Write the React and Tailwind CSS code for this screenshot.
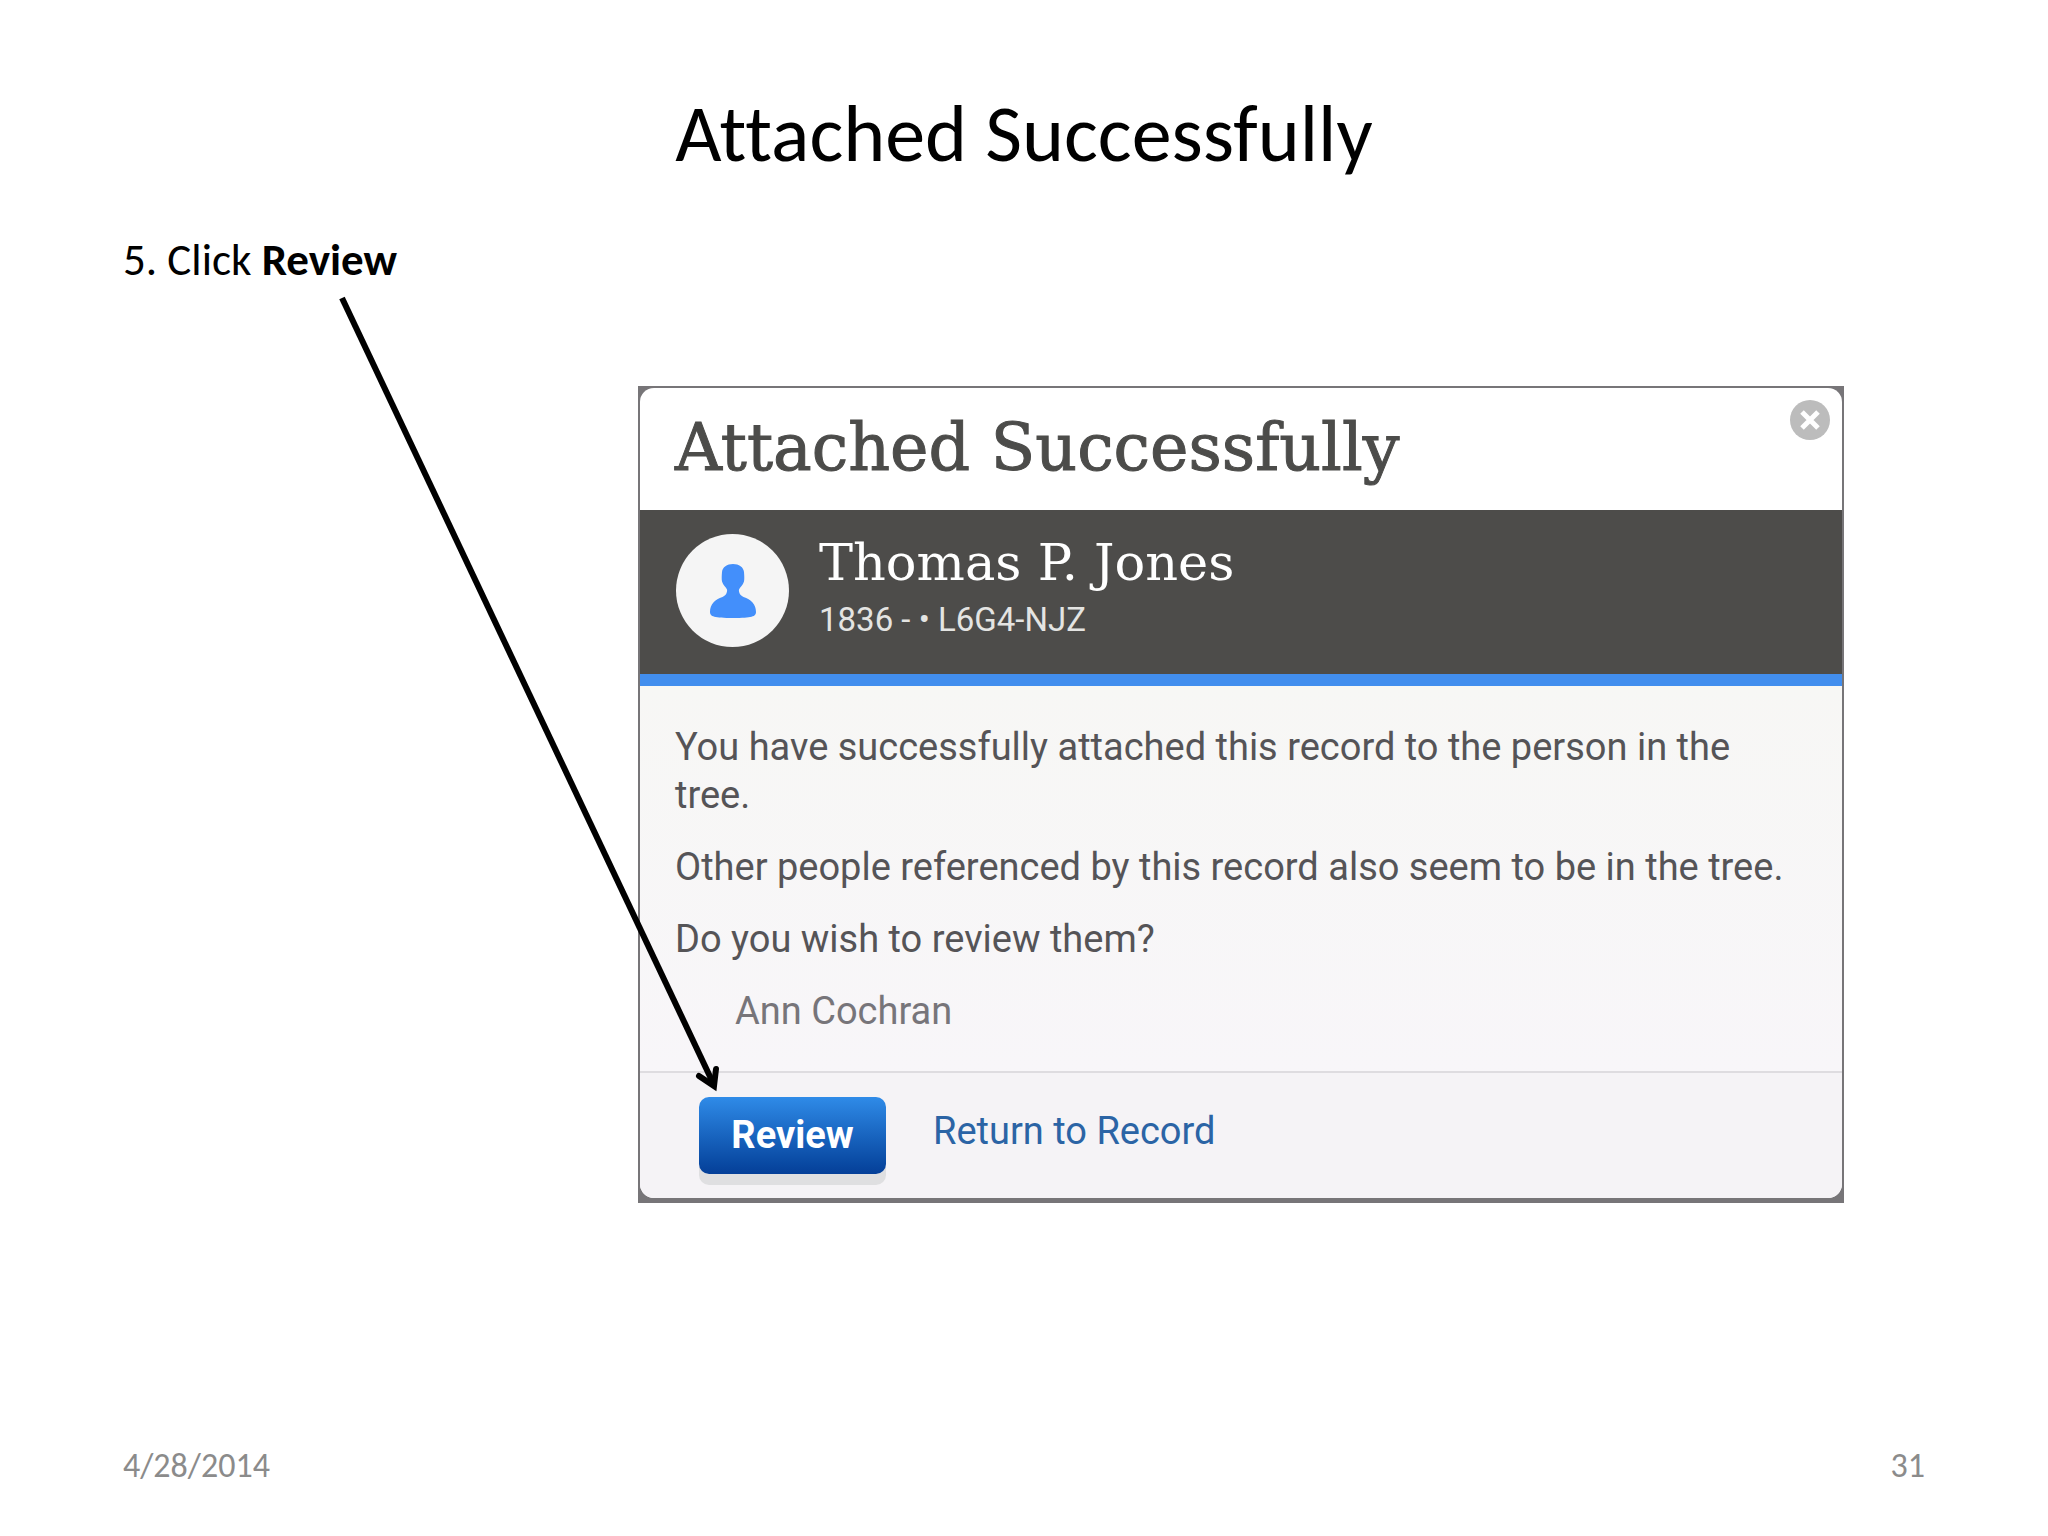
import React from 'react';

const messages = [
  'You have successfully attached this record to the person in the tree.',
  'Other people referenced by this record also seem to be in the tree.',
  'Do you wish to review them?',
];

function PersonIcon() {
  return (
    <svg viewBox="0 0 46 54" className="w-[46px] h-[54px]" fill="#438ffb" aria-hidden="true">
      <path d="M23 0C29 0 33.500 3 34 8C34.300 12 34.500 15 34 17.500C33 21 30 23 29 25.500C28.500 28 30 31.500 33.500 33C41 35.500 46 40 46 48C46 52.500 42 54 23 54C4 54 0 52.500 0 48C0 40 5 35.500 12.500 33C16 31.500 17.500 28 17 25.500C16 23 13 21 12 17.500C11.500 15 11.700 12 12 8C12.500 3 17 0 23 0Z" />
    </svg>
  );
}

function CloseIcon() {
  return (
    <svg viewBox="0 0 40 40" className="w-10 h-10" aria-hidden="true">
      <circle cx="20" cy="20" r="20" fill="#bcbcbc" />
      <path d="M12 12L28 28M28 12L12 28" stroke="#fff" strokeWidth="5" />
    </svg>
  );
}

/* Arrow from the instruction down to the Review button */
function PointerArrow() {
  return (
    <svg viewBox="0 0 400 810" className="absolute left-[330px] top-[290px] w-[400px] h-[810px] pointer-events-none" fill="none" stroke="#000" strokeWidth="6" aria-hidden="true">
      <path d="M12 8L384 795" />
      <path d="M369 786L384 796L386 779" strokeLinecap="round" />
    </svg>
  );
}

function AttachedDialog() {
  return (
    <section role="dialog" aria-labelledby="dialog-title" className="bg-[#777578] px-[2px] pt-[2px] pb-[5px] font-[Roboto,sans-serif]">
      <div className="rounded-[14px] overflow-hidden bg-white">
        <header className="flex items-start justify-between h-[122px] pl-[35px] pr-3 pt-3">
          <h2 id="dialog-title" className="pt-[12px] text-[65px] leading-[72px] text-[#4c4c4a] font-['DejaVu_Serif',serif] [-webkit-text-stroke:1px]">
            Attached Successfully
          </h2>
          <button type="button" aria-label="Close">
            <CloseIcon />
          </button>
        </header>

        <div className="flex gap-[30px] pl-9 pt-6 h-[176px] bg-[#4d4c4a] border-b-12 border-[#428eee]">
          <div className="w-[113px] h-[113px] rounded-full bg-[#f5f5f5] flex items-center justify-center">
            <PersonIcon />
          </div>
          <div>
            <h3 className="text-[51px] leading-[58px] text-white font-['DejaVu_Serif',serif]">Thomas P. Jones</h3>
            <p className="text-[33px] leading-[56px] text-[#e4e4e2]">1836 - • L6G4-NJZ</p>
          </div>
        </div>

        <div className="flex flex-col gap-6 px-[35px] pt-[37px] pb-9 text-[38px] leading-[48px] text-[#555457] bg-linear-to-b from-[#f7f7f5] to-[#f8f6f9]">
          {messages.map((message) => (
            <p key={message}>{message}</p>
          ))}
          <p className="pl-[60px] text-[#77757a]">Ann Cochran</p>
        </div>

        <footer className="flex items-start gap-[47px] pl-[59px] pt-6 pb-6 text-[38px] bg-[#f5f3f6] border-t-2 border-[#dedce0]">
          <button
            type="button"
            className="w-[187px] h-[77px] rounded-[10px] text-white font-bold bg-linear-to-b from-[#2f8be8] to-[#053f98] shadow-[0_11px_0_#dfdfe1]"
          >
            Review
          </button>
          <a href="#record" className="leading-[68px] text-[#2b64a5]">Return to Record</a>
        </footer>
      </div>
    </section>
  );
}

export default function App() {
  return (
    <div className="relative flex flex-col min-h-screen px-[123px] pt-[84px] pb-[46px] bg-white text-black font-[Calibri,Carlito,Lato,sans-serif] [font-variant-ligatures:none]">
      <h1 className="text-[80px] leading-[100px] text-center">Attached Successfully</h1>
      <p className="mt-12 text-[45px] leading-[56px]">
        5. Click <strong>Review</strong>
      </p>

      <main className="mt-[98px] ml-[515px] mr-[81px]">
        <AttachedDialog />
      </main>

      <footer className="mt-auto flex justify-between text-[34px] leading-[48px] text-[#8b8b8b]">
        <time dateTime="2014-04-28">4/28/2014</time>
        <span>31</span>
      </footer>

      <PointerArrow />
    </div>
  );
}
